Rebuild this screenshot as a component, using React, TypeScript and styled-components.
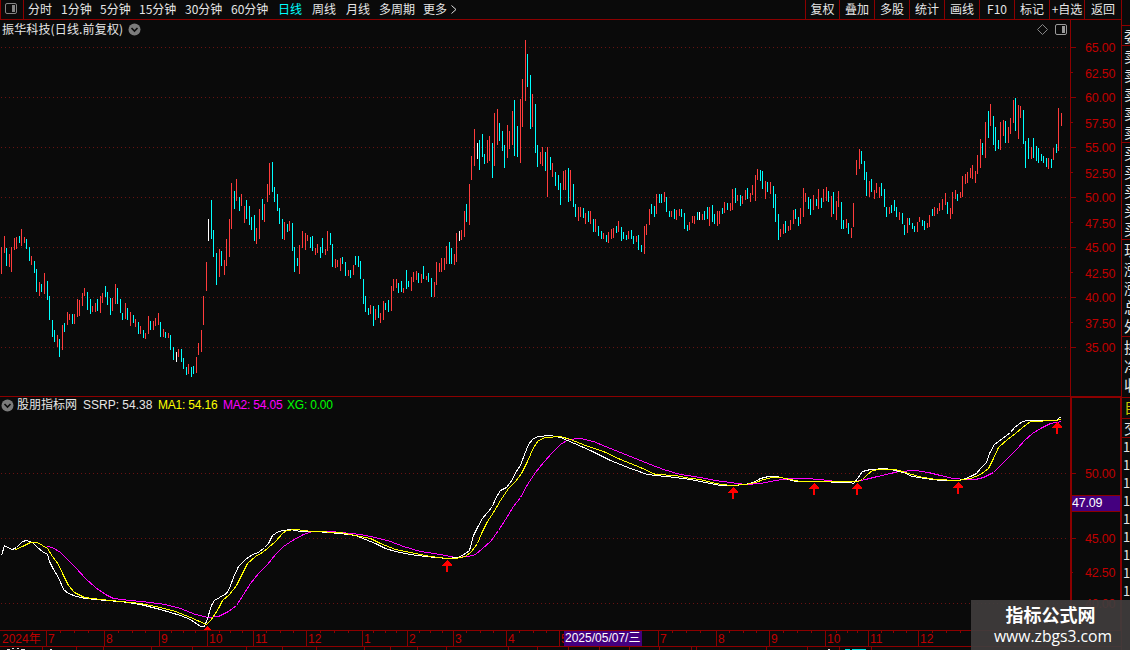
import styled, { createGlobalStyle } from 'styled-components';

type BarType = [number, number, number, string];

// x, high, low, r(up) / c(down) / w(flat)
const bars: BarType[] = [
  [1, 247, 274, 'r'], [4, 236, 253, 'r'], [6, 248, 266, 'c'], [9, 254, 267, 'r'], [11, 247, 272, 'r'],
  [14, 238, 250, 'r'], [16, 237, 249, 'r'], [19, 236, 243, 'c'], [21, 229, 246, 'r'], [24, 237, 243, 'r'],
  [26, 239, 249, 'c'], [29, 247, 261, 'c'], [31, 256, 265, 'r'], [34, 261, 273, 'c'], [36, 269, 292, 'c'],
  [39, 282, 296, 'r'], [41, 284, 292, 'c'], [44, 273, 294, 'r'], [47, 281, 300, 'c'], [49, 296, 320, 'c'],
  [52, 320, 337, 'c'], [54, 330, 342, 'c'], [57, 335, 347, 'r'], [59, 339, 357, 'c'], [62, 325, 350, 'r'],
  [64, 323, 332, 'c'], [67, 312, 325, 'r'], [69, 314, 320, 'r'], [72, 314, 324, 'c'], [74, 314, 324, 'r'],
  [77, 299, 317, 'r'], [79, 300, 316, 'r'], [82, 293, 306, 'r'], [84, 288, 296, 'r'], [87, 292, 310, 'c'],
  [90, 299, 314, 'c'], [92, 306, 312, 'r'], [95, 303, 312, 'r'], [97, 299, 311, 'c'], [100, 296, 313, 'r'],
  [102, 293, 303, 'r'], [105, 286, 297, 'c'], [107, 292, 305, 'c'], [110, 298, 315, 'c'], [112, 298, 311, 'r'],
  [115, 284, 304, 'r'], [117, 288, 304, 'c'], [120, 299, 313, 'c'], [122, 313, 320, 'c'], [125, 303, 319, 'r'],
  [127, 308, 320, 'c'], [130, 312, 326, 'r'], [133, 315, 323, 'c'], [135, 319, 327, 'r'], [138, 322, 334, 'c'],
  [140, 326, 334, 'r'], [143, 330, 338, 'c'], [145, 333, 339, 'r'], [148, 316, 334, 'r'], [150, 321, 330, 'c'],
  [153, 321, 330, 'r'], [155, 318, 326, 'r'], [158, 313, 325, 'r'], [160, 322, 337, 'c'], [163, 329, 337, 'r'],
  [165, 332, 338, 'c'], [168, 333, 338, 'r'], [170, 335, 350, 'c'], [173, 347, 360, 'c'], [176, 352, 362, 'w'],
  [178, 349, 357, 'r'], [181, 349, 362, 'c'], [183, 358, 369, 'c'], [186, 367, 375, 'c'], [188, 364, 374, 'r'],
  [191, 367, 377, 'c'], [193, 366, 374, 'c'], [196, 357, 373, 'r'], [198, 343, 355, 'r'], [201, 330, 352, 'r'],
  [203, 296, 325, 'r'], [206, 262, 291, 'r'], [208, 219, 241, 'w'], [211, 200, 239, 'c'], [213, 230, 257, 'c'],
  [216, 253, 285, 'c'], [219, 249, 277, 'r'], [221, 251, 266, 'c'], [224, 260, 275, 'r'], [226, 239, 266, 'r'],
  [229, 219, 257, 'r'], [231, 183, 229, 'r'], [234, 191, 209, 'c'], [236, 179, 201, 'r'], [239, 197, 211, 'c'],
  [241, 194, 206, 'r'], [244, 206, 223, 'r'], [246, 200, 219, 'c'], [249, 206, 225, 'c'], [251, 217, 230, 'c'],
  [254, 215, 241, 'c'], [256, 228, 244, 'r'], [259, 209, 239, 'r'], [262, 199, 220, 'c'], [264, 204, 222, 'r'],
  [267, 184, 202, 'r'], [269, 163, 195, 'r'], [272, 162, 192, 'c'], [274, 187, 202, 'c'], [277, 194, 211, 'c'],
  [279, 208, 224, 'c'], [282, 219, 239, 'c'], [284, 222, 240, 'r'], [287, 224, 232, 'c'], [289, 221, 231, 'r'],
  [292, 223, 251, 'c'], [294, 247, 272, 'c'], [297, 258, 266, 'c'], [299, 245, 274, 'r'], [302, 231, 248, 'r'],
  [305, 233, 250, 'r'], [307, 235, 241, 'r'], [310, 237, 248, 'c'], [312, 236, 251, 'c'], [315, 248, 255, 'r'],
  [317, 244, 253, 'r'], [320, 247, 258, 'c'], [322, 238, 253, 'c'], [325, 249, 255, 'r'], [327, 231, 251, 'r'],
  [330, 233, 245, 'c'], [332, 244, 267, 'c'], [335, 259, 268, 'r'], [337, 260, 267, 'r'], [340, 258, 271, 'r'],
  [342, 257, 264, 'c'], [345, 262, 276, 'c'], [348, 270, 276, 'r'], [350, 270, 278, 'c'], [353, 265, 275, 'r'],
  [355, 256, 265, 'c'], [358, 256, 267, 'c'], [360, 261, 279, 'c'], [363, 279, 304, 'c'], [365, 296, 312, 'c'],
  [368, 308, 315, 'c'], [370, 305, 314, 'r'], [373, 306, 326, 'c'], [375, 309, 320, 'r'], [378, 305, 318, 'c'],
  [380, 313, 323, 'r'], [383, 301, 320, 'r'], [385, 303, 310, 'c'], [388, 300, 312, 'c'], [391, 286, 311, 'r'],
  [393, 279, 291, 'r'], [396, 279, 288, 'r'], [398, 283, 293, 'c'], [401, 281, 292, 'c'], [403, 288, 293, 'r'],
  [406, 270, 289, 'c'], [408, 281, 287, 'c'], [411, 277, 291, 'r'], [413, 272, 282, 'r'], [416, 271, 280, 'r'],
  [418, 273, 283, 'c'], [421, 274, 283, 'r'], [423, 266, 279, 'c'], [426, 276, 280, 'r'], [428, 273, 282, 'c'],
  [431, 278, 297, 'c'], [434, 282, 297, 'r'], [436, 262, 285, 'r'], [439, 263, 272, 'r'], [441, 258, 272, 'r'],
  [444, 258, 270, 'r'], [446, 246, 264, 'r'], [449, 242, 264, 'c'], [451, 248, 264, 'c'], [454, 254, 265, 'r'],
  [456, 233, 262, 'r'], [459, 231, 241, 'w'], [461, 230, 240, 'r'], [464, 211, 237, 'r'], [466, 204, 222, 'c'],
  [469, 184, 225, 'r'], [471, 156, 180, 'r'], [474, 129, 166, 'r'], [477, 143, 159, 'w'], [479, 140, 170, 'c'],
  [482, 134, 157, 'c'], [484, 154, 164, 'c'], [487, 140, 163, 'r'], [489, 136, 161, 'r'], [492, 143, 178, 'c'],
  [494, 113, 166, 'r'], [497, 109, 145, 'r'], [499, 123, 141, 'c'], [502, 131, 151, 'c'], [504, 145, 168, 'c'],
  [507, 125, 158, 'r'], [509, 131, 149, 'r'], [512, 111, 145, 'r'], [514, 100, 156, 'c'], [517, 126, 157, 'c'],
  [520, 99, 163, 'r'], [522, 79, 127, 'r'], [525, 40, 101, 'r'], [527, 54, 87, 'c'], [530, 75, 129, 'c'],
  [532, 94, 127, 'r'], [535, 104, 153, 'c'], [537, 145, 167, 'c'], [540, 152, 164, 'r'], [542, 147, 166, 'r'],
  [545, 152, 171, 'c'], [547, 147, 197, 'r'], [550, 157, 170, 'c'], [552, 163, 177, 'r'], [555, 172, 186, 'c'],
  [558, 175, 190, 'c'], [560, 183, 205, 'c'], [563, 171, 190, 'r'], [565, 170, 190, 'r'], [568, 168, 202, 'c'],
  [570, 170, 201, 'r'], [573, 184, 207, 'c'], [575, 204, 217, 'c'], [578, 207, 221, 'r'], [580, 207, 217, 'r'],
  [583, 208, 218, 'c'], [585, 213, 224, 'r'], [588, 211, 222, 'c'], [590, 211, 224, 'r'], [593, 219, 232, 'c'],
  [595, 219, 232, 'r'], [598, 226, 236, 'c'], [601, 231, 239, 'c'], [603, 233, 239, 'r'], [606, 235, 242, 'c'],
  [608, 232, 243, 'r'], [611, 229, 239, 'r'], [613, 228, 238, 'r'], [616, 226, 233, 'c'], [618, 221, 232, 'r'],
  [621, 227, 241, 'c'], [623, 232, 239, 'c'], [626, 235, 240, 'c'], [628, 231, 239, 'r'], [631, 230, 239, 'c'],
  [633, 236, 244, 'c'], [636, 236, 242, 'r'], [638, 235, 250, 'c'], [641, 245, 252, 'c'], [644, 226, 254, 'r'],
  [646, 224, 235, 'r'], [649, 209, 225, 'r'], [651, 204, 214, 'c'], [654, 206, 217, 'c'], [656, 194, 214, 'r'],
  [659, 194, 203, 'c'], [661, 194, 203, 'c'], [664, 192, 202, 'r'], [666, 197, 212, 'c'], [669, 211, 217, 'c'],
  [671, 211, 217, 'r'], [674, 209, 219, 'c'], [676, 210, 220, 'r'], [679, 209, 216, 'r'], [681, 209, 217, 'c'],
  [684, 213, 229, 'c'], [687, 225, 231, 'c'], [689, 222, 230, 'r'], [692, 216, 223, 'r'], [694, 216, 224, 'r'],
  [697, 212, 220, 'c'], [699, 212, 220, 'w'], [702, 214, 220, 'r'], [704, 211, 220, 'c'], [707, 207, 219, 'c'],
  [709, 207, 226, 'r'], [712, 205, 222, 'c'], [714, 214, 224, 'c'], [717, 211, 226, 'r'], [719, 211, 224, 'r'],
  [722, 208, 214, 'c'], [724, 202, 213, 'r'], [727, 203, 210, 'c'], [730, 203, 211, 'r'], [732, 189, 210, 'r'],
  [735, 188, 203, 'c'], [737, 195, 201, 'r'], [740, 195, 206, 'c'], [742, 196, 204, 'r'], [745, 190, 200, 'r'],
  [747, 188, 199, 'c'], [750, 193, 202, 'r'], [752, 185, 195, 'r'], [755, 175, 201, 'r'], [757, 169, 180, 'r'],
  [760, 170, 181, 'c'], [762, 171, 189, 'c'], [765, 181, 199, 'r'], [767, 182, 192, 'c'], [770, 182, 194, 'r'],
  [773, 186, 208, 'c'], [775, 194, 222, 'c'], [778, 214, 240, 'c'], [780, 229, 237, 'r'], [783, 224, 234, 'r'],
  [785, 221, 233, 'c'], [788, 226, 231, 'r'], [790, 220, 230, 'r'], [793, 210, 224, 'r'], [795, 209, 219, 'c'],
  [798, 217, 226, 'c'], [800, 208, 224, 'r'], [803, 188, 217, 'r'], [805, 193, 202, 'r'], [808, 197, 209, 'c'],
  [810, 199, 215, 'c'], [813, 195, 210, 'r'], [816, 199, 206, 'c'], [818, 189, 209, 'r'], [821, 198, 208, 'c'],
  [823, 189, 202, 'r'], [826, 187, 201, 'r'], [828, 191, 202, 'c'], [831, 196, 217, 'r'], [833, 192, 214, 'c'],
  [836, 201, 220, 'r'], [838, 191, 207, 'r'], [841, 202, 229, 'c'], [843, 220, 229, 'c'], [846, 219, 228, 'r'],
  [848, 223, 234, 'c'], [851, 228, 238, 'r'], [853, 203, 227, 'r'], [856, 160, 175, 'r'], [859, 149, 169, 'r'],
  [861, 151, 164, 'c'], [864, 161, 180, 'c'], [866, 172, 196, 'c'], [869, 181, 197, 'r'], [871, 179, 192, 'c'],
  [874, 190, 199, 'r'], [876, 183, 193, 'r'], [879, 187, 198, 'r'], [881, 183, 196, 'c'], [884, 189, 207, 'c'],
  [886, 207, 217, 'c'], [889, 207, 214, 'r'], [891, 205, 213, 'c'], [894, 200, 211, 'c'], [896, 207, 217, 'c'],
  [899, 212, 220, 'r'], [902, 213, 224, 'c'], [904, 225, 235, 'c'], [907, 218, 233, 'r'], [909, 218, 225, 'c'],
  [912, 223, 229, 'c'], [914, 226, 232, 'c'], [917, 222, 232, 'r'], [919, 217, 222, 'r'], [922, 220, 226, 'c'],
  [924, 221, 230, 'c'], [927, 223, 228, 'r'], [929, 215, 227, 'r'], [932, 209, 216, 'c'], [934, 207, 216, 'r'],
  [937, 208, 214, 'r'], [939, 203, 211, 'r'], [942, 199, 210, 'r'], [945, 193, 205, 'r'], [947, 202, 214, 'c'],
  [950, 208, 219, 'r'], [952, 192, 214, 'r'], [955, 190, 199, 'r'], [957, 194, 201, 'c'], [960, 192, 198, 'r'],
  [962, 176, 197, 'r'], [965, 174, 184, 'r'], [967, 172, 183, 'r'], [970, 168, 178, 'r'], [972, 165, 179, 'r'],
  [975, 171, 183, 'r'], [977, 155, 174, 'r'], [980, 139, 168, 'r'], [982, 143, 155, 'c'], [985, 122, 158, 'r'],
  [988, 111, 138, 'c'], [990, 104, 126, 'r'], [993, 116, 145, 'c'], [995, 127, 151, 'c'], [998, 140, 149, 'c'],
  [1000, 122, 150, 'r'], [1003, 120, 136, 'r'], [1005, 121, 143, 'c'], [1008, 127, 143, 'r'], [1010, 118, 134, 'r'],
  [1013, 100, 123, 'r'], [1015, 98, 131, 'c'], [1018, 105, 139, 'r'], [1020, 106, 118, 'r'], [1023, 110, 144, 'c'],
  [1025, 141, 168, 'c'], [1028, 138, 159, 'c'], [1031, 147, 159, 'r'], [1033, 138, 158, 'c'], [1036, 146, 161, 'c'],
  [1038, 148, 163, 'c'], [1041, 154, 161, 'c'], [1043, 156, 163, 'c'], [1046, 158, 167, 'c'], [1048, 158, 169, 'r'],
  [1051, 159, 168, 'c'], [1053, 148, 160, 'r'], [1056, 144, 153, 'c'], [1058, 108, 151, 'r'], [1061, 113, 126, 'r'],
];

const barColor: Record<string, string> = { r: '#ff3c3c', c: '#00ffff', w: '#ffffff' };

const ssrp =
  '1,555 4,545 7,547 12,549 16,547 22,541 26,540 32,542 37,547 42,551 47,554 49,561 53,569 58,577 63,589 68,593 76,596 85,598 105,600 120,601 140,604 160,609 180,615 190,619 200,626 204,626 207,618 211,605 214,600 219,597 226,593 229,588 233,577 238,566 245,559 252,554 258,552 264,547 268,543 272,535 278,531 290,529 300,531 315,531 340,533 355,535 365,539 375,543 385,548 395,551 410,554 425,556 447,558 457,557 462,555 469,550 473,535 477,527 482,518 492,506 495,498 500,490 506,487 512,479 515,472 520,465 524,454 528,444 533,438 538,436 550,435 560,437 567,440 574,443 590,450 610,460 630,468 647,474 655,475 675,477 690,479 705,482 720,485 733,485 745,484 753,482 760,478 768,476 777,476 788,479 796,481 810,481 850,482 853,483 857,478 862,471 870,469 885,468 895,470 903,472 912,476 925,478 940,480 958,480 965,478 970,476 976,473 981,467 986,462 989,453 994,444 1002,438 1010,432 1014,427 1022,421 1028,420 1056,420 1058,418 1061,416';
const ma1 =
  '15,549 22,546 30,542 37,542 42,545 47,548 52,556 58,564 63,575 68,585 74,592 84,597 100,599 120,601 140,603 160,607 175,611 190,617 206,624 210,620 215,613 218,608 222,600 229,594 236,585 242,573 247,563 255,556 262,552 268,547 275,541 282,533 286,530 295,529 312,531 340,532 355,535 370,538 380,543 395,549 410,552 430,556 447,558 455,558 465,556 471,551 477,543 481,533 487,521 493,512 500,500 508,488 515,481 521,473 527,461 533,447 538,440 545,437 560,436 570,439 585,445 603,451 620,459 640,467 655,474 675,475 690,478 700,479 715,483 730,485 745,484 755,482 763,479 772,477 780,477 790,479 800,481 815,481 850,481 857,481 862,479 867,474 872,470 880,469 895,469 905,472 918,476 935,479 958,480 970,478 980,474 988,468 993,458 998,447 1007,439 1015,433 1022,427 1030,421 1055,420 1061,419';
const ma2 =
  '47,546 52,547 60,552 68,560 75,567 85,578 95,587 105,594 113,598 130,600 150,602 165,604 180,608 195,614 208,617 218,616 228,611 236,605 243,594 250,583 258,573 267,564 275,554 283,546 292,540 303,534 312,531 330,531 340,532 360,534 375,537 390,541 403,546 420,551 440,554 455,557 468,556 475,554 482,548 490,541 498,530 505,519 513,506 520,497 527,484 535,472 543,462 552,452 560,444 568,439 580,438 593,441 605,446 620,452 635,458 650,464 663,469 680,474 700,477 715,480 730,482 745,484 760,483 775,480 790,478 805,478 820,479 835,481 855,481 865,479 877,476 890,473 898,471 915,470 928,472 940,475 953,478 965,479 975,479 983,477 993,472 1000,465 1008,457 1017,448 1024,440 1032,433 1042,427 1050,423 1061,421';

const signals = [[207, 626], [447, 560], [733, 487], [814, 483], [857, 483], [958, 482], [1057, 422]];

const periods = [
  { label: '分时', width: 33 },
  { label: '1分钟', width: 39 },
  { label: '5分钟', width: 39 },
  { label: '15分钟', width: 46 },
  { label: '30分钟', width: 46 },
  { label: '60分钟', width: 47 },
  { label: '日线', width: 34, active: true },
  { label: '周线', width: 34 },
  { label: '月线', width: 33 },
  { label: '多周期', width: 44 },
  { label: '更多', width: 27 },
];
const tools = ['复权', '叠加', '多股', '统计', '画线', 'F10', '标记', '+自选', '返回'];

const prices = ['65.00', '62.50', '60.00', '57.50', '55.00', '52.50', '50.00', '47.50', '45.00', '42.50', '40.00', '37.50', '35.00'];

const months = [
  { label: '2024年', width: 46 },
  { label: '7', width: 58 },
  { label: '8', width: 55 },
  { label: '9', width: 48 },
  { label: '10', width: 46 },
  { label: '11', width: 53 },
  { label: '12', width: 56 },
  { label: '1', width: 45 },
  { label: '2', width: 46 },
  { label: '3', width: 53 },
  { label: '4', width: 53 },
  { label: '5', width: 99, cursor: '2025/05/07/三' },
  { label: '7', width: 58 },
  { label: '8', width: 53 },
  { label: '9', width: 56 },
  { label: '10', width: 43 },
  { label: '11', width: 50 },
  { label: '12', width: 202 },
];
const bottomTicks = [42, 76, 103, 151, 192, 246, 282, 316, 364, 390, 417, 446, 508, 537, 568, 599, 629, 659, 691, 696, 766, 807, 839, 871];

const quoteGroups = [
  { height: 20, row: 19, chars: ['委'] },
  { height: 97, row: 19, chars: ['卖', '卖', '卖', '卖', '卖'] },
  { height: 97, row: 19, chars: ['买', '买', '买', '买', '买'] },
  { height: 97, row: 19, chars: ['现', '涨', '涨', '总', '外'] },
  { height: 61, row: 19, chars: ['换', '净', '收'] },
  { height: 21, row: 18, chars: ['自'], accent: true },
  { height: 19, row: 18, chars: ['交'] },
];

const ToggleIcon = ({ size = 13 }: { size?: number }) => (
  <svg width={size} height={size} viewBox="0 0 13 13">
    <circle cx="6.5" cy="6.5" r="6" fill="#7b7b7b" />
    <path d="M3.5 5 L6.5 8 L9.5 5" fill="none" stroke="#0a0a0a" strokeWidth="1.6" />
  </svg>
);

const PanelIcon = ({ color }: { color: string }) => (
  <svg width="12" height="11" viewBox="0 0 12 11">
    <rect x="0.5" y="0.5" width="11" height="10" rx="1.5" fill="none" stroke={color} />
    <rect x="7" y="2" width="3" height="7" fill={color} />
  </svg>
);

const GridLines = ({ rows }: { rows: number[] }) => (
  <>
    {rows.map((y) => (
      <line key={y} x1="1" x2="1066" y1={y + 0.5} y2={y + 0.5} stroke="#6a1212" strokeDasharray="1 3" />
    ))}
  </>
);

const App = () => {
  return (
    <Page>
      <GlobalStyle />
      <Main>
        <Toolbar>
          <PanelToggle><PanelIcon color="#858585" /></PanelToggle>
          {periods.map((p) => (
            <Period key={p.label} $width={p.width} $active={p.active}>{p.label}</Period>
          ))}
          <svg width="8" height="9" viewBox="0 0 8 9">
            <path d="M1.5 0.5 L6 4.5 L1.5 8.5" fill="none" stroke="#e0e0e0" />
          </svg>
          <Tools>
            {tools.map((t, i) => <Tool key={t} $first={i === 0} $last={i === 8}>{t}</Tool>)}
          </Tools>
        </Toolbar>

        <PriceRow>
          <Plot>
            <PriceHead>
              <StockName>振华科技(日线.前复权)</StockName>
              <ToggleIcon />
              <HeadIcons>
                <svg width="11" height="11" viewBox="0 0 11 11">
                  <path d="M5.5 0.5 L10.5 5.5 L5.5 10.5 L0.5 5.5 Z" fill="none" stroke="#858585" />
                </svg>
                <PanelIcon color="#9a9a9a" />
              </HeadIcons>
            </PriceHead>
            <Chart width="1070" height="356" viewBox="0 40 1070 356" shapeRendering="crispEdges">
              <GridLines rows={[47, 97, 147, 197, 247, 297, 347]} />
              {bars.map(([x, top, bottom, kind]) => (
                <rect key={x} x={x} y={top} width="1" height={bottom - top} fill={barColor[kind]} />
              ))}
            </Chart>
          </Plot>
          <PriceAxis>
            {prices.map((p, i) => (
              <AxisLabel key={p} $height={25} $minor={i % 2 === 1}><span>{p}</span></AxisLabel>
            ))}
          </PriceAxis>
        </PriceRow>

        <IndicatorRow>
          <Plot>
            <Legend>
              <ToggleIcon />
              <LegendItem $width={66} $color="#e6e6e6">股朋指标网</LegendItem>
              <LegendItem $width={75} $color="#e6e6e6">SSRP: 54.38</LegendItem>
              <LegendItem $width={65} $color="#ffff00" $tight>MA1: 54.16</LegendItem>
              <LegendItem $width={64} $color="#ff00ff" $tight>MA2: 54.05</LegendItem>
              <LegendItem $width={60} $color="#00ff00" $tight>XG: 0.00</LegendItem>
            </Legend>
            <Chart width="1070" height="217" viewBox="0 413 1070 217" shapeRendering="crispEdges">
              <GridLines rows={[473, 538, 603]} />
              <g transform="translate(0.5 0.5)" fill="none">
                <polyline points={ma2} stroke="#ff00ff" />
                <polyline points={ssrp} stroke="#ffffff" />
                <polyline points={ma1} stroke="#ffff00" />
              </g>
              {signals.map(([x, y]) => (
                <path key={x} d={`M${x} ${y} l5 5 v1 h-4 v6 h-2 v-6 h-4 v-1 z`} fill="#ff0000" />
              ))}
            </Chart>
          </Plot>
          <IndicatorAxis>
            <AxisLabel $height={25} $inset><span>50.00</span></AxisLabel>
            <CursorPrice>47.09</CursorPrice>
            <AxisLabel $height={31} $inset><span>45.00</span></AxisLabel>
            <AxisLabel $height={36} $inset $minor><span>42.50</span></AxisLabel>
            <AxisLabel $height={28} $inset><span>40.00</span></AxisLabel>
          </IndicatorAxis>
        </IndicatorRow>

        <Months>
          {months.map((m, i) => (
            <Month key={i} $width={m.width} $first={i === 0}>
              {i > 0 && (
                <Ticks width={m.width} height="2" shapeRendering="crispEdges">
                  {[1, 2, 3].map((n) => (
                    <rect key={n} x={Math.round((Math.min(m.width, 56) * n) / 4) - 1} y="0" width="1" height="2" fill="#8c0000" />
                  ))}
                </Ticks>
              )}
              {m.label}
              {m.cursor && <CursorDate>{m.cursor}</CursorDate>}
            </Month>
          ))}
        </Months>
        <Footer>
          <svg width="1121" height="3" shapeRendering="crispEdges">
            {bottomTicks.map((x) => <rect key={x} x={x} y="0" width="1" height="3" fill="#8c0000" />)}
            <path d="M7 2.5h3M12 1.5h2M17 1.5h2M21 2.5h4M50 2.5h2M828 2.5h2" stroke="#e0e0e0" />
            <path d="M845 2.5h5M852 2.5h14" stroke="#00e0e0" />
          </svg>
        </Footer>
      </Main>

      <Quotes>
        {quoteGroups.map((g, i) => (
          <QuoteGroup key={i} $height={g.height} $accent={g.accent}>
            {g.chars.map((c, j) => <QuoteChar key={j} $height={g.row}>{c}</QuoteChar>)}
          </QuoteGroup>
        ))}
        <Deals>
          {Array.from({ length: 9 }, (_, i) => <Deal key={i}>1</Deal>)}
        </Deals>
      </Quotes>

      <Watermark>
        <SiteName>指标公式网</SiteName>
        <SiteUrl>www.zbgs3.com</SiteUrl>
      </Watermark>
    </Page>
  );
};

const GlobalStyle = createGlobalStyle`
  body {
    margin: 0;
    background-color: #0a0a0a;
  }
  svg {
    display: block;
    flex: none;
  }
`;

const Page = styled.div`
  position: relative;
  display: flex;
  width: 1130px;
  height: 650px;
  overflow: hidden;
  background-color: #0a0a0a;
  color: #e6e6e6;
  font-family: 'Noto Sans CJK SC', sans-serif;
  font-size: 12px;
  white-space: nowrap;
`;

const Main = styled.div`
  display: flex;
  flex-direction: column;
  flex: none;
  width: 1121px;
`;

const Toolbar = styled.div`
  display: flex;
  align-items: center;
  box-sizing: border-box;
  height: 20px;
  border-bottom: 1px solid #8c0000;
  line-height: 17px;
`;

const PanelToggle = styled.div`
  display: flex;
  align-items: center;
  box-sizing: border-box;
  width: 24px;
  height: 19px;
  margin-right: 4px;
  padding: 0 0 2px 4px;
  border-left: 1px solid #8c0000;
  border-right: 1px solid #8c0000;
`;

const Period = styled.span<{ $width: number; $active?: boolean }>`
  flex: none;
  width: ${({ $width }) => $width}px;
  height: 19px;
  color: ${({ $active }) => ($active ? '#00ffff' : '#e6e6e6')};
`;

const Tools = styled.div`
  display: flex;
  margin-left: auto;
`;

const Tool = styled.span<{ $first: boolean; $last: boolean }>`
  box-sizing: border-box;
  width: ${({ $first, $last }) => ($first ? 34 : $last ? 37 : 35)}px;
  height: 19px;
  border-left: 1px solid #8c0000;
  text-align: center;
`;

const PriceRow = styled.div`
  display: flex;
  height: 376px;
`;

const Plot = styled.div`
  width: 1070px;
`;

const PriceHead = styled.div`
  display: flex;
  align-items: center;
  box-sizing: border-box;
  height: 20px;
  padding: 0 0 1px 2px;
`;

const StockName = styled.span`
  width: 126px;
  height: 19px;
  letter-spacing: 0.15px;
  line-height: 18px;
`;

const HeadIcons = styled.div`
  display: flex;
  align-items: center;
  gap: 7px;
  margin: 0 3px 0 auto;
`;

const Chart = styled.svg`
  overflow: hidden;
`;

const PriceAxis = styled.div`
  box-sizing: border-box;
  width: 51px;
  padding-top: 15px;
  border-left: 1px solid #8c0000;
`;

const AxisLabel = styled.div<{ $height: number; $minor?: boolean; $inset?: boolean }>`
  display: flex;
  align-items: center;
  height: ${({ $height }) => $height}px;
  color: #c00000;
  font-family: 'Liberation Sans', sans-serif;
  font-size: 12.5px;
  letter-spacing: -0.2px;
  line-height: 16px;

  span {
    padding-top: ${({ $minor }) => ($minor ? 2 : 0)}px;
  }

  &::before {
    content: '';
    width: ${({ $minor, $inset }) => ($minor ? 2 : 5) - ($inset ? 1 : 0)}px;
    height: 1px;
    margin-right: ${({ $minor }) => ($minor ? 12 : 9)}px;
    background-color: #8c0000;
  }
`;

const IndicatorRow = styled.div`
  display: flex;
  box-sizing: border-box;
  height: 234px;
  border-top: 1px solid #8c0000;
`;

const Legend = styled.div`
  display: flex;
  align-items: center;
  height: 16px;
  padding-left: 1px;
  font-family: 'Liberation Sans', 'Noto Sans CJK SC', sans-serif;
  line-height: 16px;
`;

const LegendItem = styled.span<{ $width: number; $color: string; $tight?: boolean }>`
  width: ${({ $width }) => $width}px;
  color: ${({ $color }) => $color};
  letter-spacing: ${({ $tight }) => ($tight ? '-0.2px' : 'normal')};

  &:nth-child(2) {
    margin-left: 3px;
  }
`;

const IndicatorAxis = styled.div`
  box-sizing: border-box;
  width: 51px;
  height: 233px;
  padding-top: 63px;
  overflow: hidden;
  border: solid #8c0000;
  border-width: 1px 1px 0 2px;
`;

const CursorPrice = styled.div`
  box-sizing: border-box;
  height: 17px;
  margin: 9px 0 11px;
  border: solid #8c0000;
  border-width: 1px 0;
  background-color: #44007f;
  color: #ffffff;
  font-family: 'Liberation Sans', sans-serif;
  font-size: 12.5px;
  letter-spacing: -0.2px;
  line-height: 15px;
`;

const Months = styled.div`
  display: flex;
  box-sizing: border-box;
  height: 17px;
  border: solid #8c0000;
  border-width: 1px 0;
  overflow: hidden;
  font-family: 'Liberation Sans', 'Noto Sans CJK SC', sans-serif;
`;

const Month = styled.div<{ $width: number; $first: boolean }>`
  position: relative;
  flex: none;
  box-sizing: border-box;
  width: ${({ $width }) => $width}px;
  padding-left: ${({ $first }) => ($first ? 2 : 1)}px;
  border-left: ${({ $first }) => ($first ? 'none' : '1px solid #8c0000')};
  color: #c00000;
  line-height: 16px;
`;

// small week marks hanging from the top edge of a month
const Ticks = styled.svg`
  position: absolute;
  top: 0;
  left: 0;
`;

const CursorDate = styled.span`
  position: absolute;
  top: 0;
  left: 4px;
  width: 77px;
  padding-left: 1px;
  background-color: #44007f;
  color: #ffffff;
  line-height: 15px;
`;

const Footer = styled.div`
  height: 3px;
`;

const Quotes = styled.div`
  box-sizing: border-box;
  flex: none;
  width: 9px;
  padding-top: 25px;
  overflow: hidden;
  border-left: 1px solid #8c0000;
`;

const QuoteGroup = styled.div<{ $height: number; $accent?: boolean }>`
  box-sizing: border-box;
  height: ${({ $height }) => $height}px;
  padding-left: 2px;
  border-top: 1px solid #8c0000;
  color: ${({ $accent }) => ($accent ? '#c8c800' : '#e6e6e6')};
  font-size: 15px;
`;

const QuoteChar = styled.div<{ $height: number }>`
  height: ${({ $height }) => $height}px;
  line-height: ${({ $height }) => $height}px;
`;

const Deals = styled.div`
  border-top: 1px solid #8c0000;
`;

const Deal = styled.div`
  height: 18px;
  padding-left: 1px;
  font-size: 13px;
  line-height: 17px;
`;

const Watermark = styled.div`
  position: absolute;
  right: 0;
  bottom: 0;
  display: flex;
  flex-direction: column;
  align-items: center;
  width: 159px;
  height: 50px;
  background-color: rgba(64, 60, 60, 0.93);
  color: #ffffff;
`;

const SiteName = styled.div`
  height: 27px;
  font-size: 18px;
  font-weight: 700;
  line-height: 29px;
`;

const SiteUrl = styled.div`
  padding-left: 5px;
  font-family: 'Open Sans', sans-serif;
  font-size: 15.7px;
  line-height: 18px;
`;

export default App;
